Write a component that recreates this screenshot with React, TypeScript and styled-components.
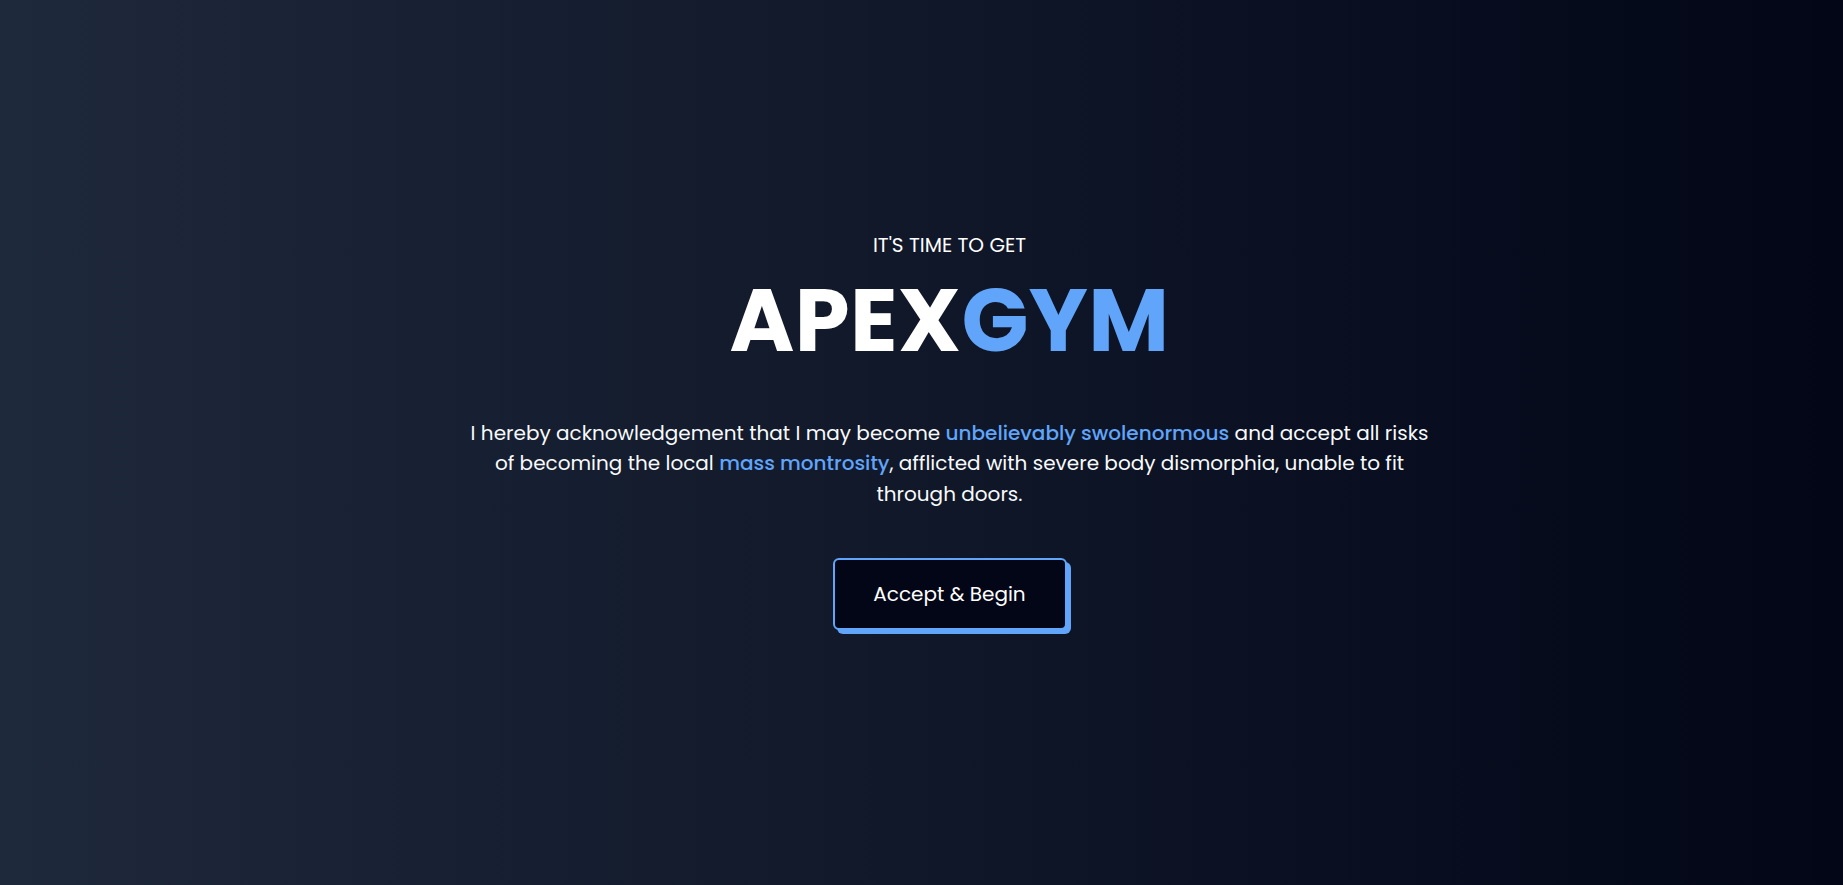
import React from "react";
import styled, { createGlobalStyle } from "styled-components";

const Global = createGlobalStyle`
  html, body { margin: 0; padding: 0; }
  body { font-family: "Poppins", "Inter", "Noto Sans", sans-serif; }
  * { box-sizing: border-box; }
`;

const Page = styled.main`
  min-height: 100vh;
  width: 100%;
  display: flex;
  flex-direction: column;
  align-items: center;
  justify-content: center;
  background: linear-gradient(to right, #1e293b, #020617);
  color: #ffffff;
  padding: 0 0 24px 56px;
`;

const Eyebrow = styled.p`
  margin: 0;
  font-size: 20px;
  font-weight: 400;
  line-height: 28px;
  text-transform: uppercase;
`;

const Title = styled.h1`
  margin: 12px 0 0;
  font-size: 88px;
  font-weight: 700;
  line-height: 100px;
  letter-spacing: 0.4px;
`;

const Accent = styled.span`
  color: #60a5fa;
`;

const Strong = styled.span`
  color: #60a5fa;
  font-weight: 500;
`;

const Body = styled.p`
  margin: 47px 0 0;
  max-width: 1000px;
  text-align: center;
  font-size: 20px;
  line-height: 30.6px;
  font-weight: 400;
  color: #f8fafc;
`;

const Button = styled.button`
  margin-top: 49px;
  width: 234px;
  height: 72px;
  background: #020617;
  color: #ffffff;
  border: 2px solid #60a5fa;
  border-radius: 6px;
  box-shadow: 4px 4px 0 #60a5fa;
  font-family: inherit;
  font-size: 20px;
  font-weight: 400;
  cursor: pointer;
`;

export default function App() {
  return (
    <>
      <Global />
      <Page>
        <Eyebrow>It's time to get</Eyebrow>
        <Title>
          APEX<Accent>GYM</Accent>
        </Title>
        <Body>
          I hereby acknowledgement that I may become{" "}
          <Strong>unbelievably swolenormous</Strong> and accept all risks
          <br />
          of becoming the local <Strong>mass montrosity</Strong>, afflicted with
          severe body dismorphia, unable to fit
          <br />
          through doors.
        </Body>
        <Button>Accept &amp; Begin</Button>
      </Page>
    </>
  );
}
